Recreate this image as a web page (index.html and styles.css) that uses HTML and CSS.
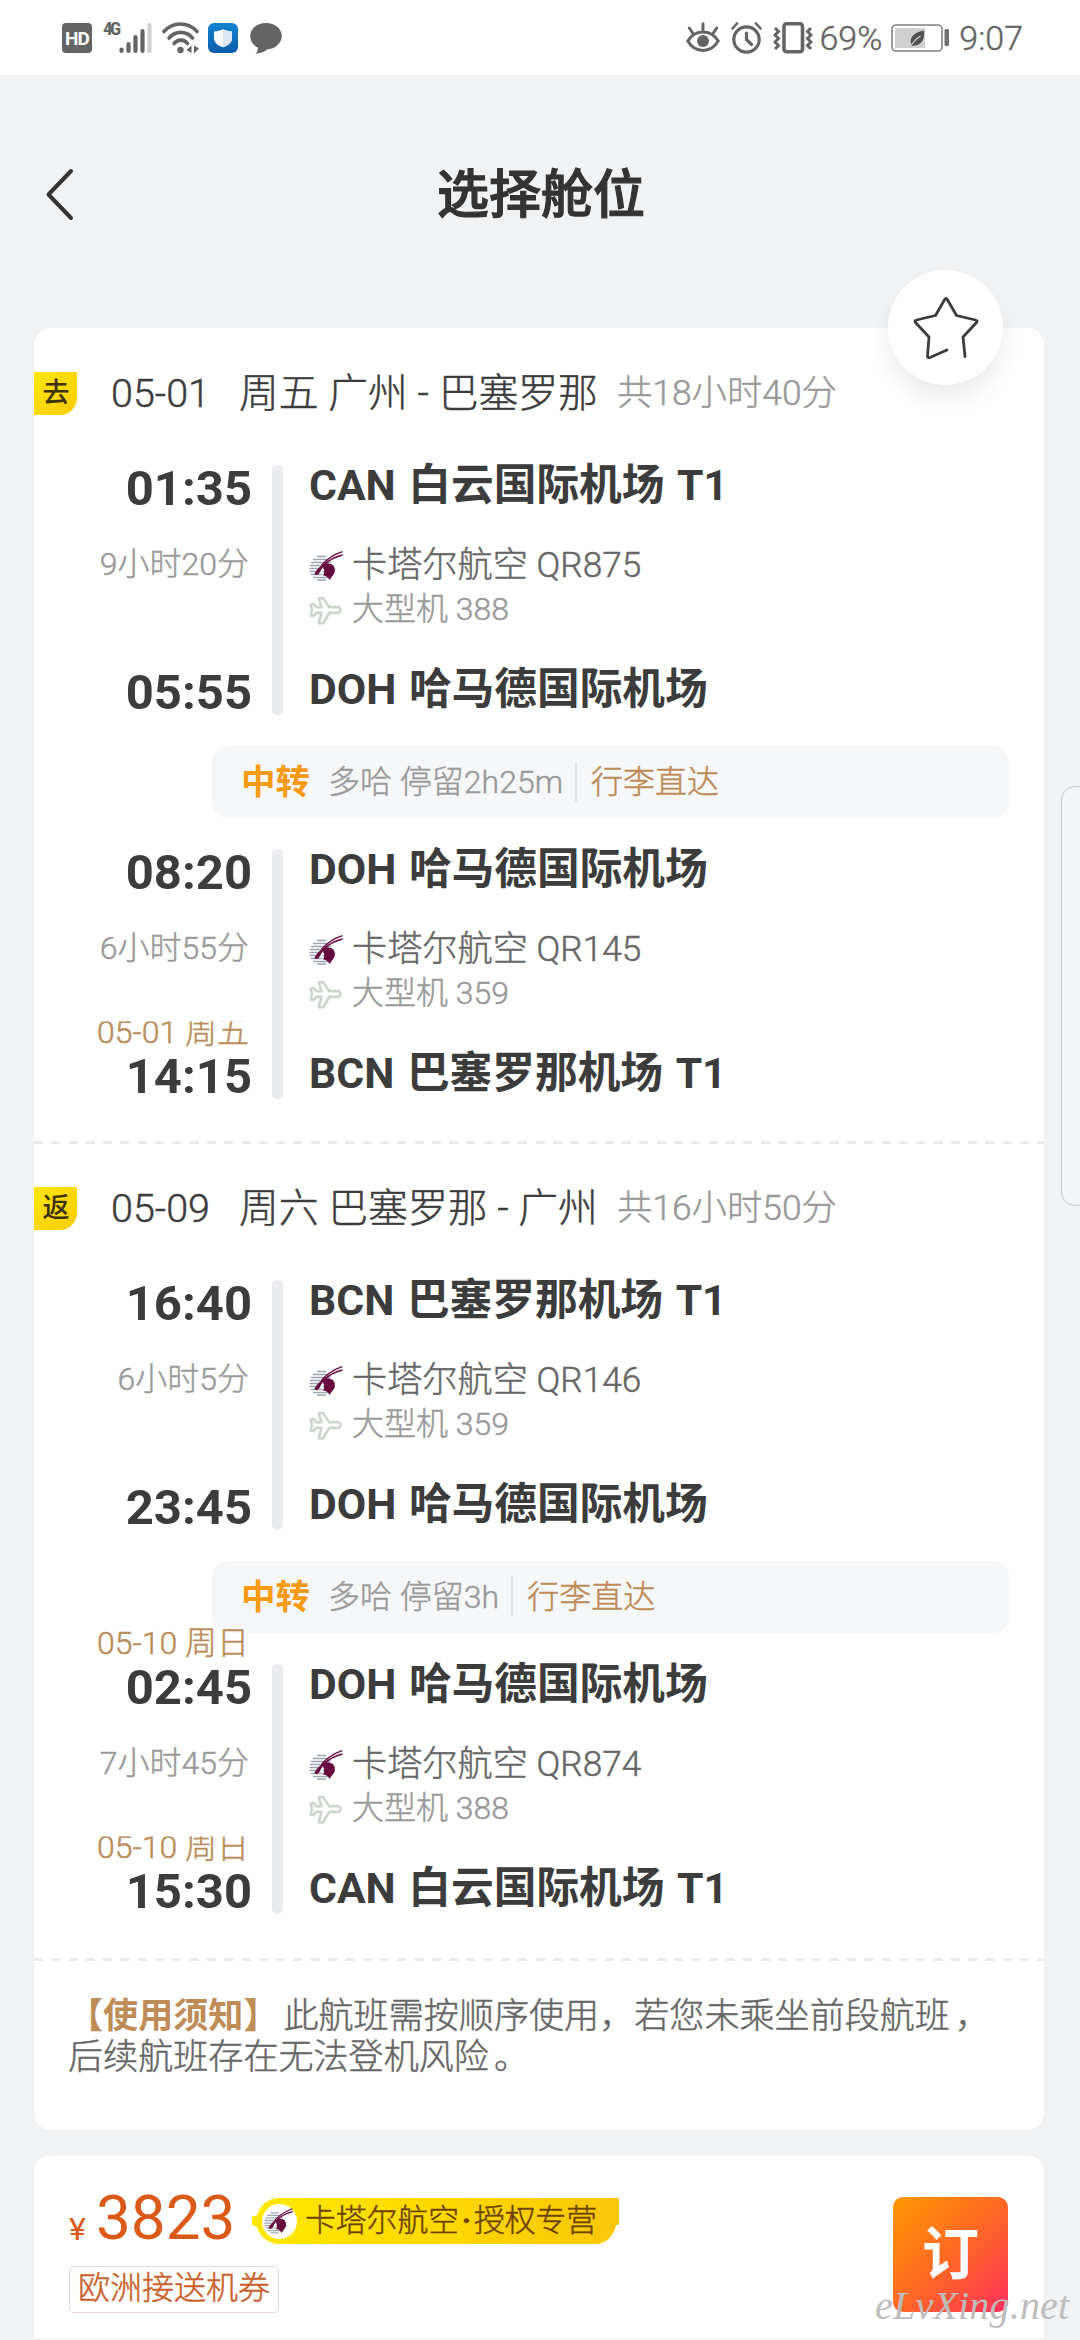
FILE: index.html
```html
<!DOCTYPE html>
<html lang="zh-CN">
<head>
<meta charset="utf-8">
<title>选择舱位</title>
<link rel="stylesheet" href="styles.css">
</head>
<body>
<svg class="sprite" aria-hidden="true">
  <symbol id="qatar" viewBox="0 0 34 30">
    <path d="M8 5.4h9M4 8.4h16M2 11.4h20M.8 14.4h24M.3 17.4h26M.6 20.4h25M2 23.4h21M4 26.4h17M8 29h9" stroke="#9da5b3" stroke-width="1.5" fill="none"/>
    <path d="M14 13.5c3-2 8-1.500 10.500 1.500c2 3 1.800 7-.8 9.500l-3.200 4.500c-1-2.500-3-4-6-4.500c1-3 1-6-.5-8.500l-4 6.500c-1.500 2-3.500 1.800-4.600.4c1.800-3.400 4.600-7 8.600-9.400z" fill="#66063c"/>
    <path d="M11.500 20l2.200-3.500c.8 2.500.4 5-1 7.500z" fill="#fff"/>
    <path d="M12.500 14.200C18 8 25 3.500 33.200.6M15.500 13.500C20 9 26 6 33.500 4" stroke="#66063c" stroke-width="1.300" fill="none"/>
  </symbol>
  <symbol id="plane" viewBox="0 0 34 30">
    <path d="M12.500 12.200 9.800 3.300 14 3l6.300 9.200h8.500a2.800 2.800 0 0 1 0 5.600h-8.500L14 28.500l-4.200-.3 2.700-10.400H7.200L4.800 21 1.800 20.600 3 15 1.800 9.500 4.800 9l2.400 3.200z" fill="none" stroke="#cdd6cd" stroke-width="2.700" stroke-linejoin="round"/>
  </symbol>
</svg>

<header class="status">
  <div class="status-side">
    <span class="hd">HD</span>
    <span class="net">4G</span>
    <svg class="signal" width="34" height="32" viewBox="0 0 34 32">
      <g stroke-width="4.200" stroke-linecap="round" stroke="#646464"><path d="M2.500 27.500v1.500M9.500 22v7M16.500 15v14M23.500 9v20"/><path d="M30.500 3v26" stroke="#cfcfcf"/></g>
    </svg>
    <svg class="wifi" width="38" height="32" viewBox="0 0 38 32">
      <g fill="none" stroke="#646464" stroke-width="3.600" stroke-linecap="round"><path d="M2 9.500C11-.5 26-.5 35 9.500"/><path d="M7 16c6.500-7.500 17-7.500 23.500 0"/><path d="M12 21.500c4-4.500 10-4.500 13.500 0"/></g>
      <circle cx="18.500" cy="28" r="3.200" fill="#646464"/>
      <path d="M29.500 23.500V31L24.500 28zM32 23.500l5 3-5 5z" fill="#646464"/>
    </svg>
    <svg class="shield" width="30" height="30" viewBox="0 0 30 30">
      <defs><linearGradient id="blue" x2="0" y2="1"><stop offset="0" stop-color="#1484d2"/><stop offset="1" stop-color="#0b5da9"/></linearGradient></defs>
      <rect width="30" height="30" rx="6" fill="url(#blue)"/>
      <path d="M15 6.200c3 1.400 6 2.100 9 2.300v6.500c0 4.500-4 7.800-9 9.300-5-1.500-9-4.800-9-9.300V8.500c3-.2 6-.9 9-2.300z" fill="#fafcff"/>
      <path d="M15 6.200c3 1.400 6 2.100 9 2.300v6.500c0 4.500-4 7.800-9 9.300z" fill="#dce7f3"/>
    </svg>
    <svg class="chat" width="32" height="31" viewBox="0 0 32 31">
      <path d="M16 0c9 0 15.800 5.800 15.800 13S25 26 17 26.500c-3 2.700-7 3.900-11.500 4.200 2-1.800 2.600-4 2.300-6.200C3 22.200.2 18 .2 13 .2 5.800 7 0 16 0z" fill="#646464"/>
    </svg>
  </div>
  <div class="status-side">
    <svg class="eye" width="34" height="32" viewBox="0 0 34 32">
      <g fill="none" stroke="#646464" stroke-width="3" stroke-linecap="round"><path d="M1.800 19C9 7 25 7 32.200 19 25 31.500 9 31.500 1.800 19zM17 1.800V8M3.300 6 7 11.500M30.700 6 27 11.500"/></g>
      <circle cx="17" cy="19" r="6" fill="#646464"/>
    </svg>
    <svg class="alarm" width="31" height="32" viewBox="0 0 31 32">
      <g fill="none" stroke="#646464" stroke-width="3.200" stroke-linecap="round" stroke-linejoin="round"><circle cx="15.500" cy="17.500" r="12.700"/><path d="M15.500 11v6.500l5 5"/><path d="M1.500 6.500l4.500-5M29.500 6.500 25 1.500" stroke-width="2.600"/></g>
    </svg>
    <svg class="vibrate" width="40" height="32" viewBox="0 0 40 32">
      <g fill="none" stroke="#646464"><rect x="11" y="1.800" width="18.500" height="28" rx="2.500" stroke-width="3.600"/><path d="M2 6l3.500 3.500L2 13l3.500 3.500L2 20l3.500 3.500L2 27M38 6l-3.500 3.500L38 13l-3.500 3.500L38 20l-3.500 3.500L38 27" stroke-width="3"/></g>
    </svg>
    <span class="stat-text">69%</span>
    <svg class="battery" width="60" height="28" viewBox="0 0 60 28">
      <rect x="1" y="1" width="50" height="26" rx="4" fill="#fff" stroke="#808080" stroke-width="1.600"/>
      <rect x="4" y="4" width="30" height="20" fill="#d0d0d0"/>
      <path d="M33 6.500c1 8-2 15-10 15l-3.500 1 .6-2.500C18 13 24 8 33 6.500z" fill="#505050"/><path d="M19.500 22.500C22 18 25 15 29.500 12" stroke="#d0d0d0" stroke-width="1.200" fill="none"/>
      <rect x="53.500" y="5" width="4.500" height="17" rx="1.500" fill="#707070"/>
    </svg>
    <span class="stat-text">9:07</span>
  </div>
</header>

<nav class="titlebar">
  <svg width="30" height="54" viewBox="0 0 30 54"><path d="M27 4 4.500 27.500 27 51" fill="none" stroke="#333" stroke-width="4" stroke-linecap="round" stroke-linejoin="round"/></svg>
  <h1>选择舱位</h1>
</nav>

<main>
  <section class="card trip">
    <button class="favorite" aria-label="收藏">
      <svg width="66" height="64" viewBox="0 0 66 64"><path d="M52 60.500 50 41 63.500 26.500Q65 24.500 62.500 24L43.500 19.500 34.300 3.500Q33 1.500 31.700 3.500L22.500 19.500 3.500 24Q1 24.500 2.500 26.500L16 41 14.500 60Q14.500 62.500 17 61.500L34 54" fill="none" stroke="#3c3c3c" stroke-width="2.800" stroke-linecap="round" stroke-linejoin="round"/></svg>
    </button>

    <div class="journey">
      <div class="route"><b class="badge">去</b><span class="day">05-01</span><span class="cities">周五 广州 - 巴塞罗那</span><span class="total">共18小时40分</span></div>
      <div class="leg">
        <div class="times"><p class="time">01:35</p><p class="dur">9小时20分</p><p class="time">05:55</p></div>
        <i class="bar"></i>
        <div class="stops">
          <p class="airport">CAN 白云国际机场 T1</p>
          <p class="airline"><svg class="ico"><use href="#qatar"/></svg>卡塔尔航空 QR875</p>
          <p class="craft"><svg class="ico"><use href="#plane"/></svg>大型机 388</p>
          <p class="airport">DOH 哈马德国际机场</p>
        </div>
      </div>
      <div class="transfer"><b>中转</b><span class="stay">多哈 停留2h25m</span><span class="through">行李直达</span></div>
      <div class="leg">
        <div class="times"><p class="time">08:20</p><p class="dur">6小时55分</p><p class="time"><span class="date cut">05-01 周五</span>14:15</p></div>
        <i class="bar"></i>
        <div class="stops">
          <p class="airport">DOH 哈马德国际机场</p>
          <p class="airline"><svg class="ico"><use href="#qatar"/></svg>卡塔尔航空 QR145</p>
          <p class="craft"><svg class="ico"><use href="#plane"/></svg>大型机 359</p>
          <p class="airport">BCN 巴塞罗那机场 T1</p>
        </div>
      </div>
    </div>

    <div class="dash"></div>

    <div class="journey back">
      <div class="route"><b class="badge">返</b><span class="day">05-09</span><span class="cities">周六 巴塞罗那 - 广州</span><span class="total">共16小时50分</span></div>
      <div class="leg">
        <div class="times"><p class="time">16:40</p><p class="dur">6小时5分</p><p class="time">23:45</p></div>
        <i class="bar"></i>
        <div class="stops">
          <p class="airport">BCN 巴塞罗那机场 T1</p>
          <p class="airline"><svg class="ico"><use href="#qatar"/></svg>卡塔尔航空 QR146</p>
          <p class="craft"><svg class="ico"><use href="#plane"/></svg>大型机 359</p>
          <p class="airport">DOH 哈马德国际机场</p>
        </div>
      </div>
      <div class="transfer"><b>中转</b><span class="stay">多哈 停留3h</span><span class="through">行李直达</span></div>
      <div class="leg">
        <div class="times"><p class="time"><span class="date">05-10 周日</span>02:45</p><p class="dur">7小时45分</p><p class="time"><span class="date cut">05-10 周日</span>15:30</p></div>
        <i class="bar"></i>
        <div class="stops">
          <p class="airport">DOH 哈马德国际机场</p>
          <p class="airline"><svg class="ico"><use href="#qatar"/></svg>卡塔尔航空 QR874</p>
          <p class="craft"><svg class="ico"><use href="#plane"/></svg>大型机 388</p>
          <p class="airport">CAN 白云国际机场 T1</p>
        </div>
      </div>
    </div>

    <div class="dash"></div>
    <p class="notice"><b>【使用须知】</b>此航班需按顺序使用，若您未乘坐前段航班<span class="mark">，</span><br>后续航班存在无法登机风险<span class="mark">。</span></p>
  </section>

  <section class="card offer">
    <div class="offer-info">
      <div class="price-row">
        <span class="yen">¥</span><span class="price">3823</span>
        <div class="brand">
          <svg class="brand-shape" width="368" height="46" viewBox="0 0 368 46">
            <defs><linearGradient id="gold"><stop offset="0" stop-color="#ffe800"/><stop offset=".5" stop-color="#ffd900"/><stop offset="1" stop-color="#fbc60a"/></linearGradient></defs>
            <path d="M27 0H367V27h-3c-2 11-10 19-21 19H27C17 46 8 39 5 29L0 27v-8l5-2C8 7 17 0 27 0z" fill="url(#gold)"/>
            <circle cx="27.500" cy="23.500" r="17.500" fill="#fff"/>
          </svg>
          <svg class="brand-logo" width="29" height="26"><use href="#qatar"/></svg>
          <span class="brand-name">卡塔尔航空<i>·</i>授权专营</span>
        </div>
      </div>
      <span class="coupon">欧洲接送机券</span>
    </div>
    <button class="book">订</button>
  </section>
</main>

<aside class="edge"></aside>
<div class="watermark">eLvXing.net</div>
</body>
</html>
```
FILE: styles.css
```css
* { box-sizing: border-box; margin: 0; padding: 0; }
html { overflow: hidden; }
body {
  position: relative;
  width: 1080px;
  height: 2340px;
  overflow: hidden;
  background: #f0f2f4;
  color: #3c3c3c;
  font-family: Roboto, "Noto Sans CJK SC", sans-serif;
}
svg { display: block; flex: none; }
i { font-style: normal; }
button { border: 0; font-family: inherit; }
.sprite { position: absolute; width: 0; height: 0; }

.status {
  height: 75px;
  padding: 0 57px 0 62px;
  display: flex;
  justify-content: space-between;
  background: #fff;
  color: #646464;
}
.status-side { display: flex; align-items: flex-start; padding-top: 22px; }
.hd {
  width: 30px; height: 30px; margin-top: 1px;
  border-radius: 4px;
  background: #646464; color: #fff;
  font: 700 19px/31px Roboto, sans-serif;
  letter-spacing: -1px;
  text-align: center;
}
.net { width: 18px; margin-left: 11px; font: 700 19px/14px "Roboto Condensed", Roboto, sans-serif; letter-spacing: -2.500px; }
.signal { margin-left: -2px; }
.wifi { margin-left: 9px; }
.shield { margin: 1px 0 0 8px; }
.chat { margin: 1px 0 0 12px; }
.alarm { margin-left: 11px; }
.vibrate { margin: 0 6px 0 11px; }
.stat-text { font-size: 34px; line-height: 33px; font-weight: 300; -webkit-text-stroke: .4px; }
.battery { margin: 2px 8px 0 9px; }

.titlebar {
  height: 253px;
  padding: 92px 44px 0;
  display: grid;
  grid-template-columns: 30px 1fr 30px;
  align-items: start;
}
.titlebar h1 { color: #333; font-size: 52px; line-height: 58px; font-weight: 500; text-align: center; padding-left: 2px; -webkit-text-stroke: 1.200px; }

main { padding: 0 36px 0 34px; display: flex; flex-direction: column; gap: 25px; }
.card { border-radius: 17px; background: #fff; }
.trip { position: relative; height: 1802px; }
.favorite {
  position: absolute; top: -58px; right: 41px;
  width: 115px; height: 115px;
  display: grid; place-items: center;
  border-radius: 50%;
  background: #fff;
  box-shadow: 0 14px 22px rgba(0, 0, 0, .08);
}

.journey { padding: 44px 0 42px; }
.journey.back { padding: 43px 0 44px; }
.route { height: 43px; margin-bottom: 50px; display: flex; align-items: center; font-size: 39.800px; line-height: 43px; font-weight: 300; white-space: nowrap; }
.badge {
  width: 43px; height: 43px;
  border-radius: 0 0 17px 0;
  background: linear-gradient(135deg, #ffe512, #f8cc04);
  color: #3c3208;
  font-size: 27px; line-height: 43px; font-weight: 500;
  text-align: center; padding-left: 1px;
}
.day { width: 128px; margin-left: 34px; font-size: 39.500px; }
.day, .cities, .total, .dur, .date, .airline, .craft, .stay, .through, .notice, .coupon, .brand-name { -webkit-text-stroke: .45px; }
.total { margin-left: 19px; color: #999; font-size: 35.400px; }

.leg { height: 250px; display: grid; grid-template-columns: 218px 11px 1fr; grid-template-rows: 250px; column-gap: 20px; }
.times { display: flex; flex-direction: column; text-align: right; }
.time { position: relative; font-size: 49px; line-height: 47px; font-weight: 700; }
.dur { margin: 32px 3px 85px 0; color: #999; font-size: 32px; line-height: 40px; font-weight: 300; }
.date {
  position: absolute; right: 3px; bottom: calc(100% + 4px);
  color: #b98c59;
  font-size: 32px; line-height: 33px; font-weight: 300;
  white-space: nowrap;
}
.cut { clip-path: inset(5.500px 0 0 0); }
.bar { border-radius: 6px; background: #e9ebef; }
.stops { padding-left: 6px; }
.airport { font-size: 42.700px; line-height: 41px; font-weight: 700; word-spacing: 2px; }
.airline, .craft { display: flex; align-items: center; line-height: 43px; font-weight: 300; white-space: pre; }
.airline { margin-top: 38px; color: #666; font-size: 35.200px; }
.craft { margin: 1px 0 38px; color: #999; font-size: 32px; }
.ico { width: 34px; height: 30px; margin-right: 9px; }

.transfer {
  width: 797px; height: 72px; margin: 31px 0 31px 178px; padding-left: 29px;
  display: flex; align-items: center;
  border-radius: 16px;
  background: #f6f7f9;
  font-size: 32px; line-height: 40px; font-weight: 300;
}
.transfer b { color: #f59a11; font-size: 34.500px; font-weight: 700; }
.stay { margin-left: 18px; color: #999; }
.through { margin-left: 12px; padding-left: 14px; border-left: 2px solid #dfe3e8; color: #bd8a55; }

.dash { height: 3px; background: repeating-linear-gradient(90deg, #ebebeb 0 9px, transparent 9px 17.300px); }
.notice { padding: 35px 0 0 34px; color: #666; font-size: 35.100px; line-height: 41px; font-weight: 300; white-space: nowrap; }
.notice b { margin-right: 5px; color: #bf8c57; font-weight: 700; -webkit-text-stroke: 0; }
.mark { margin-left: 5px; }

.offer { height: 185px; padding: 39px 36px 0 35px; display: flex; justify-content: space-between; border-bottom: 1px solid #ebebeb; border-radius: 17px 17px 0 0; }
.offer-info { display: flex; flex-direction: column; align-items: flex-start; }
.price-row { display: flex; color: #dc5a18; }
.yen { width: 27px; padding-top: 17px; font-size: 32px; line-height: 36px; }
.price { width: 153px; font-size: 62px; line-height: 51px; margin-top: -2px; }
.brand { position: relative; width: 368px; height: 46px; margin: 4px 0 0 3px; padding-left: 12px; display: flex; align-items: center; }
.brand-shape { position: absolute; left: 0; top: 0; }
.brand-logo { position: relative; margin-right: 12px; }
.brand-name { position: relative; display: flex; color: #6b4200; font-size: 30.800px; line-height: 46px; font-weight: 300; }
.brand-name i { width: 15px; text-align: center; font-weight: 700; }
.coupon {
  height: 47px; margin-top: 19px; padding: 0 8px;
  border: 1.500px solid #eed6d6; border-radius: 5px;
  color: #c9602a; font-size: 32px; line-height: 43px; font-weight: 300;
}
.book {
  width: 115px; height: 115px; margin-top: 3px;
  border-radius: 10px;
  background: linear-gradient(135deg, #ff9800, #ff6428 55%, #ff2f5b);
  color: #fff; font-size: 57px; line-height: 112px; font-weight: 700;
}

.edge { position: absolute; left: 1061px; top: 786px; width: 30px; height: 420px; border: 1.500px solid #c8cacd; border-radius: 14px; background: #f2f3f5; }
.watermark {
  position: absolute; left: 875px; top: 2281px;
  color: #bdbdbd;
  font: italic 400 40px/50px "Liberation Serif", serif;
  letter-spacing: .2px;
}
```
